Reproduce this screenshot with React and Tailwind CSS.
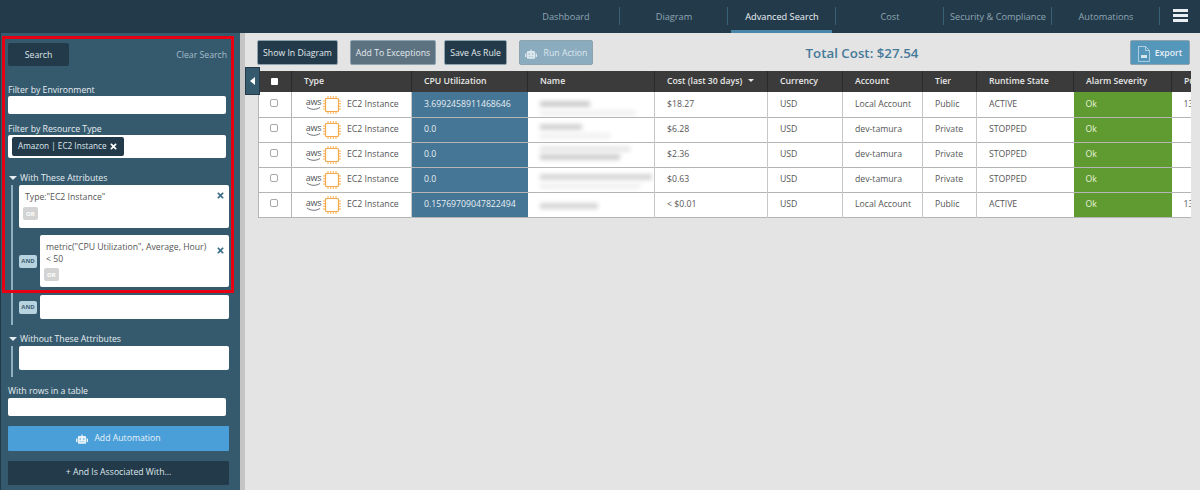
import { FaRobot, FaTimes } from 'react-icons/fa';

const navItems = ['Dashboard', 'Diagram', 'Advanced Search', 'Cost', 'Security & Compliance', 'Automations'];

const columns = [
  { label: 'Type' },
  { label: 'CPU Utilization' },
  { label: 'Name' },
  { label: 'Cost (last 30 days)', sort: true },
  { label: 'Currency' },
  { label: 'Account' },
  { label: 'Tier' },
  { label: 'Runtime State' },
  { label: 'Alarm Severity' },
  { label: 'Public IP' },
];

// blur bars: [top, width, colour] standing in for the masked names
const rows = [
  { cpu: '3.6992458911468646', cost: '$18.27', account: 'Local Account', tier: 'Public', state: 'ACTIVE', ip: '13.112', blur: [[9, 50, '#cdcdcd'], [18, 96, '#f1f1f1']] },
  { cpu: '0.0', cost: '$6.28', account: 'dev-tamura', tier: 'Private', state: 'STOPPED', ip: '', blur: [[6, 42, '#d2d2d2'], [15, 70, '#f1f1f1']] },
  { cpu: '0.0', cost: '$2.36', account: 'dev-tamura', tier: 'Private', state: 'STOPPED', ip: '', blur: [[3, 90, '#e8e8e8'], [11, 80, '#cfcfcf']] },
  { cpu: '0.0', cost: '$0.63', account: 'dev-tamura', tier: 'Private', state: 'STOPPED', ip: '', blur: [[6, 112, '#d6d6d6'], [15, 100, '#f1f1f1']] },
  { cpu: '0.15769709047822494', cost: '< $0.01', account: 'Local Account', tier: 'Public', state: 'ACTIVE', ip: '13.112', blur: [[10, 58, '#d6d6d6']] },
];

function AwsChipIcon() {
  return (
    <span className="flex items-center gap-[2px]">
      <span className="relative flex w-[15px] flex-col items-center leading-none">
        <span className="text-[9px] leading-[8px] tracking-[-0.3px] text-[#4a4f55]">aws</span>
        <svg width="16" height="5" viewBox="0 0 16 5">
          <path d="M1 1c4 3 9 3 13 .5" fill="none" stroke="#6b7076" strokeWidth="1" />
        </svg>
      </span>
      <svg width="18" height="18" viewBox="0 0 18 18">
        <rect x="2.5" y="2.5" width="13" height="13" rx="1" fill="#fff" stroke="#f5a94a" strokeWidth="1.2" />
        <path d="M5 0v2M7.7 0v2M10.3 0v2M13 0v2M5 16v2M7.7 16v2M10.3 16v2M13 16v2M0 5h2M0 7.7h2M0 10.3h2M0 13h2M16 5h2M16 7.7h2M16 10.3h2M16 13h2" stroke="#f5a94a" strokeWidth="0.9" />
      </svg>
    </span>
  );
}

function ExportIcon() {
  return (
    <svg width="12" height="16" viewBox="0 0 12 16">
      <path d="M.5.5h7l4 4v11H.5z" fill="none" stroke="#d5e5ee" strokeWidth="0.7" />
      <path d="M7.5.5v4h4" fill="none" stroke="#d5e5ee" strokeWidth="0.7" />
      <rect x="3" y="9" width="6" height="3" fill="#d5e5ee" />
    </svg>
  );
}

function SmallTag({ label, tone }) {
  const look = tone === 'and' ? 'bg-[#b7d3df] text-[#3d5f72]' : 'bg-[#d3d3d3] text-white';
  return <span className={`flex h-[13px] items-center justify-center rounded-[2px] px-[3px] text-[6px] font-bold ${look}`}>{label}</span>;
}

function Label({ children, className = '' }) {
  return <div className={`text-[8.7px] leading-[12px] text-[#e6edf1] ${className}`}>{children}</div>;
}

function WhiteInput({ className = '' }) {
  return <div className={`rounded-[2px] bg-white ${className}`} />;
}

function Triangle() {
  return <span className="h-0 w-0 border-x-[4px] border-t-[4px] border-x-transparent border-t-[#e6edf1]" />;
}

function Sidebar() {
  return (
    <aside className="relative h-full w-[240px] shrink-0 border-l border-[#22394a] bg-[#355a6e] pl-[7px] pr-[11px] pt-[10px]">
      <div className="flex items-center justify-between pr-[2px]">
        <div className="flex h-[23px] w-[61px] items-center justify-center rounded-[2px] bg-[#233a4a] pt-[2px] text-[8.7px] text-[#dfe7ec]">Search</div>
        <span className="pt-[2px] text-[8.7px] text-[#a5bdca]">Clear Search</span>
      </div>

      <Label className="mt-[17px] pt-px">Filter by Environment</Label>
      <WhiteInput className="h-[18px] w-[218px]" />

      <Label className="mt-[8px] pt-px">Filter by Resource Type</Label>
      <div className="flex h-[23px] w-[218px] items-center rounded-[2px] bg-white pl-[4px]">
        <span className="flex h-[19px] w-[112px] items-center justify-between whitespace-nowrap rounded-[2px] bg-[#233a4a] px-[6px] text-[8.2px] text-[#dfe7ec]">
          Amazon | EC2 Instance
          <FaTimes className="text-[9px] text-white" />
        </span>
      </div>

      <div className="mt-[14px] flex items-center gap-[3px] pl-[1px]">
        <Triangle />
        <Label>With These Attributes</Label>
      </div>
      <div className="mt-[1px] flex">
        <div className="ml-[3px] w-[2px] self-stretch bg-[#8fb0c0]" />
        <div className="ml-[6px] flex-1">
          <div className="relative h-[43px] w-[210px] rounded-[2px] bg-white pl-[6px] pt-[6px] text-[8.7px] leading-[12px] text-[#555]">
            Type:"EC2 Instance"
            <FaTimes className="absolute right-[4px] top-[6px] text-[9px] text-[#3d708c]" />
            <div className="mt-[4px] -ml-[2px] w-fit"><SmallTag label="OR" /></div>
          </div>
          <div className="mt-[7px] flex items-center">
            <div className="w-[21px] pr-[3px]"><SmallTag label="AND" tone="and" /></div>
            <div className="relative h-[52px] w-[189px] rounded-[2px] bg-white pl-[6px] pr-[14px] pt-[6px] text-[8.7px] leading-[12px] text-[#555]">
              metric("CPU Utilization", Average, Hour)
              <br />
              &lt; 50
              <FaTimes className="absolute right-[4px] top-[11px] text-[9px] text-[#3d708c]" />
              <div className="mt-[3px] -ml-[2px] w-fit"><SmallTag label="OR" /></div>
            </div>
          </div>
          <div className="mt-[8px] flex items-center pb-[6px]">
            <div className="w-[21px] pr-[3px]"><SmallTag label="AND" tone="and" /></div>
            <WhiteInput className="h-[24px] w-[189px]" />
          </div>
        </div>
      </div>

      <div className="mt-[8px] flex items-center gap-[3px] pl-[1px]">
        <Triangle />
        <Label>Without These Attributes</Label>
      </div>
      <div className="mt-[1px] flex">
        <div className="ml-[3px] h-[31px] w-[2px] bg-[#8fb0c0]" />
        <WhiteInput className="ml-[6px] h-[24px] w-[210px]" />
      </div>

      <Label className="mt-[7px] pt-px">With rows in a table</Label>
      <WhiteInput className="mt-[1px] h-[18px] w-[218px]" />

      <button type="button" className="mt-[10px] flex h-[25px] w-[221px] items-center justify-center gap-[6px] rounded-[1px] bg-[#4a9fd8] text-[8.7px] text-[#e8f3fa]">
        <FaRobot className="text-[12px]" />
        Add Automation
      </button>
      <button type="button" className="mt-[10px] flex h-[24px] w-[221px] items-center justify-center rounded-[1px] bg-[#233a4a] text-[8.7px] text-[#dfe7ec]">
        + And Is Associated With...
      </button>

      <div className="pointer-events-none absolute left-[1px] top-[3px] h-[257px] w-[232px] border-[3px] border-[#e60012]" />
    </aside>
  );
}

function ActionButton({ children, className = '' }) {
  return (
    <button type="button" className={`flex h-[25px] items-center justify-center whitespace-nowrap rounded-[2px] border border-[#8fa3ae] pt-[2px] text-[8.7px] ${className}`}>
      {children}
    </button>
  );
}

function ResultsTable() {
  return (
    <div className="mt-[6px] w-[933px] overflow-hidden">
      <table className="w-[988px] table-fixed border-collapse text-[8.7px] text-[#555]">
        <colgroup>
          <col className="w-[33px]" />
          <col className="w-[120px]" />
          <col className="w-[116px]" />
          <col className="w-[127px]" />
          <col className="w-[113px]" />
          <col className="w-[75px]" />
          <col className="w-[80px]" />
          <col className="w-[54px]" />
          <col className="w-[97px]" />
          <col className="w-[98px]" />
          <col className="w-[75px]" />
        </colgroup>
        <thead>
          <tr className="h-[21px] bg-[#3b3b3b] text-left text-[#e8e8e8]">
            <th className="border-r border-[#2a2a2a] text-center">
              <span className="mx-auto block h-[7px] w-[7px] rounded-[1px] bg-white" />
            </th>
            {columns.map((col) => (
              <th key={col.label} className="whitespace-nowrap border-r border-[#2a2a2a] pl-3 font-semibold">
                {col.label}
                {col.sort ? <span className="ml-[6px] inline-block h-0 w-0 translate-y-[-2px] border-x-[3px] border-t-[3px] border-x-transparent border-t-[#e8e8e8]" /> : null}
              </th>
            ))}
          </tr>
        </thead>
        <tbody className="[&_td]:pt-px">
          {rows.map((row, index) => (
            <tr key={index} className="h-[25px] border-b border-[#b5b5b5] bg-white">
              <td className="border-x border-[#b5b5b5] text-center">
                <span className="mx-auto block h-[8px] w-[8px] -translate-y-[2px] -translate-x-px rounded-[2px] border border-[#a8a8a8] bg-white" />
              </td>
              <td className="border-r border-[#c8c8c8] pl-[14px]">
                <span className="flex items-center gap-[6px]">
                  <AwsChipIcon />
                  EC2 Instance
                </span>
              </td>
              <td className="bg-[#457696] pl-3 text-[#e6eff4]">{row.cpu}</td>
              <td className="relative overflow-hidden pl-3">
                {row.blur.map(([top, width, colour], i) => (
                  <span
                    key={i}
                    className="absolute left-[12px] h-[6px] blur-[2px]"
                    style={{ top, width, backgroundColor: colour }}
                  />
                ))}
              </td>
              <td className="border-x border-[#c8c8c8] pl-3">{row.cost}</td>
              <td className="border-r border-[#c8c8c8] pl-3">USD</td>
              <td className="border-r border-[#c8c8c8] pl-3">{row.account}</td>
              <td className="border-r border-[#c8c8c8] pl-3">{row.tier}</td>
              <td className="pl-3">{row.state}</td>
              <td className="bg-[#609b31] pl-3 text-[#e8f2dd]">Ok</td>
              <td className="whitespace-nowrap pl-3">{row.ip}</td>
            </tr>
          ))}
        </tbody>
      </table>
    </div>
  );
}

export default function App() {
  return (
    <div className="flex h-[490px] w-[1200px] flex-col overflow-hidden bg-[#e4e4e4] font-['Open_Sans',sans-serif]">
      <header className="relative flex h-[33px] shrink-0 items-center justify-end bg-[#233a4a]">
        <nav className="flex h-full items-center pr-[40px]">
          {navItems.map((item) => (
            <div key={item} className="relative flex h-full w-[108px] items-center justify-center">
              <span className={`whitespace-nowrap text-[9.2px] ${item === 'Advanced Search' ? 'text-[#eef3f6]' : 'text-[#8fa6b3]'}`}>{item}</span>
              <span className="absolute right-0 top-[7px] h-[18px] w-px bg-[#3a6074]" />
              {item === 'Advanced Search' ? <span className="absolute bottom-0 left-[3px] h-[3px] w-[101px] bg-[#4a86a8]" /> : null}
            </div>
          ))}
        </nav>
        <div className="absolute right-[12px] top-[9px] flex w-[15px] flex-col gap-[2px]">
          <span className="h-[3px] bg-[#e8eef2]" />
          <span className="h-[3px] bg-[#e8eef2]" />
          <span className="h-[3px] bg-[#e8eef2]" />
        </div>
      </header>

      <div className="flex min-h-0 flex-1">
        <Sidebar />
        <div className="w-[5px] shrink-0 bg-[#c4c4c4]" />
        <main className="relative min-w-0 flex-1 pl-[13px] pt-[7px]">
          <div className="flex items-center">
            <ActionButton className="-ml-px w-[81px] bg-[#233a4a] text-[#e4eaee]">Show In Diagram</ActionButton>
            <ActionButton className="ml-[12px] w-[86px] bg-[#5d7280] text-[#e4eaee]">Add To Exceptions</ActionButton>
            <ActionButton className="ml-[8px] w-[63px] bg-[#233a4a] text-[#e4eaee]">Save As Rule</ActionButton>
            <ActionButton className="ml-[12px] w-[74px] gap-[7px] bg-[#8bacbf] text-[#dde8ee]">
              <FaRobot className="text-[12px]" />
              Run Action
            </ActionButton>
            <div className="ml-[212px] w-[114px] whitespace-nowrap pt-[2px] text-center text-[13.3px] font-semibold text-[#467a99]">Total Cost: $27.54</div>
            <ActionButton className="ml-[211px] w-[60px] gap-[5px] border-[#6d9db8] bg-[#5596bb] font-semibold text-[#e6f0f6]">
              <ExportIcon />
              Export
            </ActionButton>
          </div>
          <ResultsTable />
          <button type="button" className="absolute left-0 top-[34px] flex h-[28px] w-[15px] items-center justify-center border border-[#233a4a] bg-[#355a6e]">
            <span className="h-0 w-0 border-y-[4px] border-r-[5px] border-y-transparent border-r-white" />
          </button>
        </main>
      </div>
    </div>
  );
}
